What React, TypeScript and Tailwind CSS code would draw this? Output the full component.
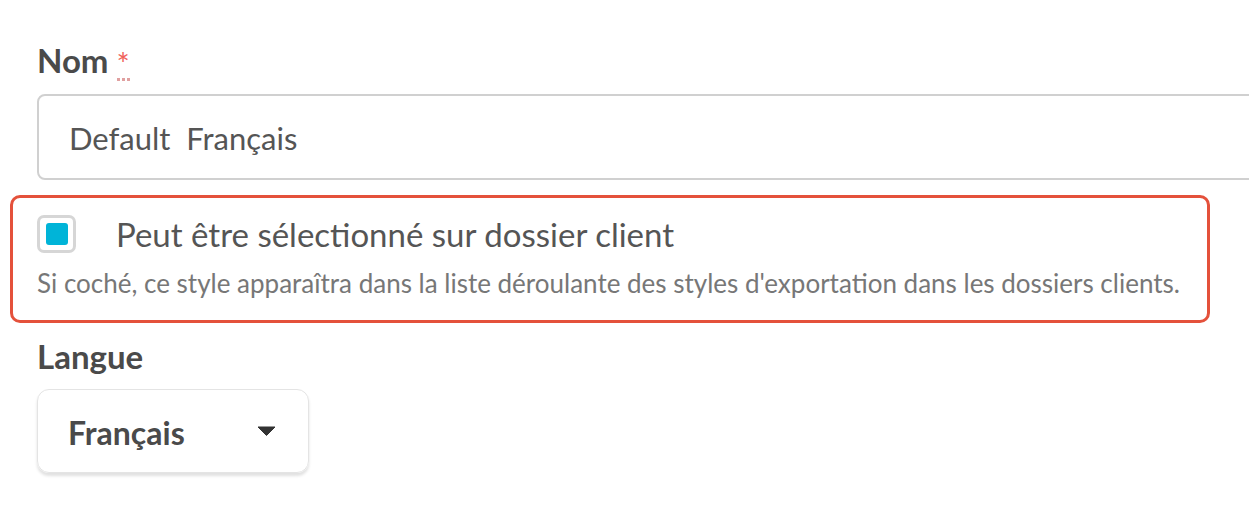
const App = () => {
  return (
    <div className="w-[1249px] h-[524px] overflow-hidden bg-white font-['Lato','Liberation_Sans',sans-serif] pl-[10px]">
      <div className="pl-[27px] pt-[43px]">
        <label className="flex items-start h-[34px] text-[33px] leading-[34px] font-bold text-[#4a4a4a]">
          Nom
          <abbr
            title="obligatoire"
            className="ml-[8px] mt-[6px] text-[31px] leading-[28px] font-normal text-[#f0625a] no-underline border-b-[3px] border-dotted border-[#e0a0a0] h-[32px]"
          >
            *
          </abbr>
        </label>
        <div className="mt-[17px] h-[86px] w-[1240px] rounded-[8px] border-2 border-[#d0d0d0] flex items-center pl-[30px] pt-[2px] text-[31px] text-[#555] whitespace-pre">
          Default  Français
        </div>
      </div>

      <div className="mt-[15px] w-[1200px] h-[128px] rounded-[10px] border-[3px] border-[#e4513b] pl-[24px] pt-[17px]">
        <div className="flex items-center h-[38px]">
          <div className="w-[39px] h-[38px] rounded-[7px] border-[3px] border-[#d6d6d6] flex items-center justify-center">
            <div className="w-[22px] h-[22px] rounded-[3px] bg-[#00b4d8]" />
          </div>
          <span className="ml-[40px] text-[33px] leading-[38px] text-[#555]">
            Peut être sélectionné sur dossier client
          </span>
        </div>
        <p className="mt-[15px] text-[26px] leading-[30px] text-[#777]">
          Si coché, ce style apparaîtra dans la liste déroulante des styles d'exportation dans les dossiers clients.
        </p>
      </div>

      <div className="pl-[27px] pt-[16px]">
        <label className="block h-[34px] text-[33px] leading-[34px] font-bold text-[#4a4a4a]">
          Langue
        </label>
        <div className="mt-[16px] h-[84px] w-[272px] rounded-[12px] border border-[#e4e4e4] shadow-[0_3px_3px_rgba(0,0,0,0.12)] flex items-center justify-between pl-[30px] pr-[32px] pt-[4px]">
          <span className="text-[32px] font-bold text-[#4a4a4a]">Français</span>
          <svg width="19" height="10" viewBox="0 0 19 10" className="-mt-[4px]">
            <path d="M1 1 H18 L9.5 9.5 Z" fill="#333" stroke="#333" strokeWidth="1" strokeLinejoin="round" />
          </svg>
        </div>
      </div>
    </div>
  );
};

export default App;
